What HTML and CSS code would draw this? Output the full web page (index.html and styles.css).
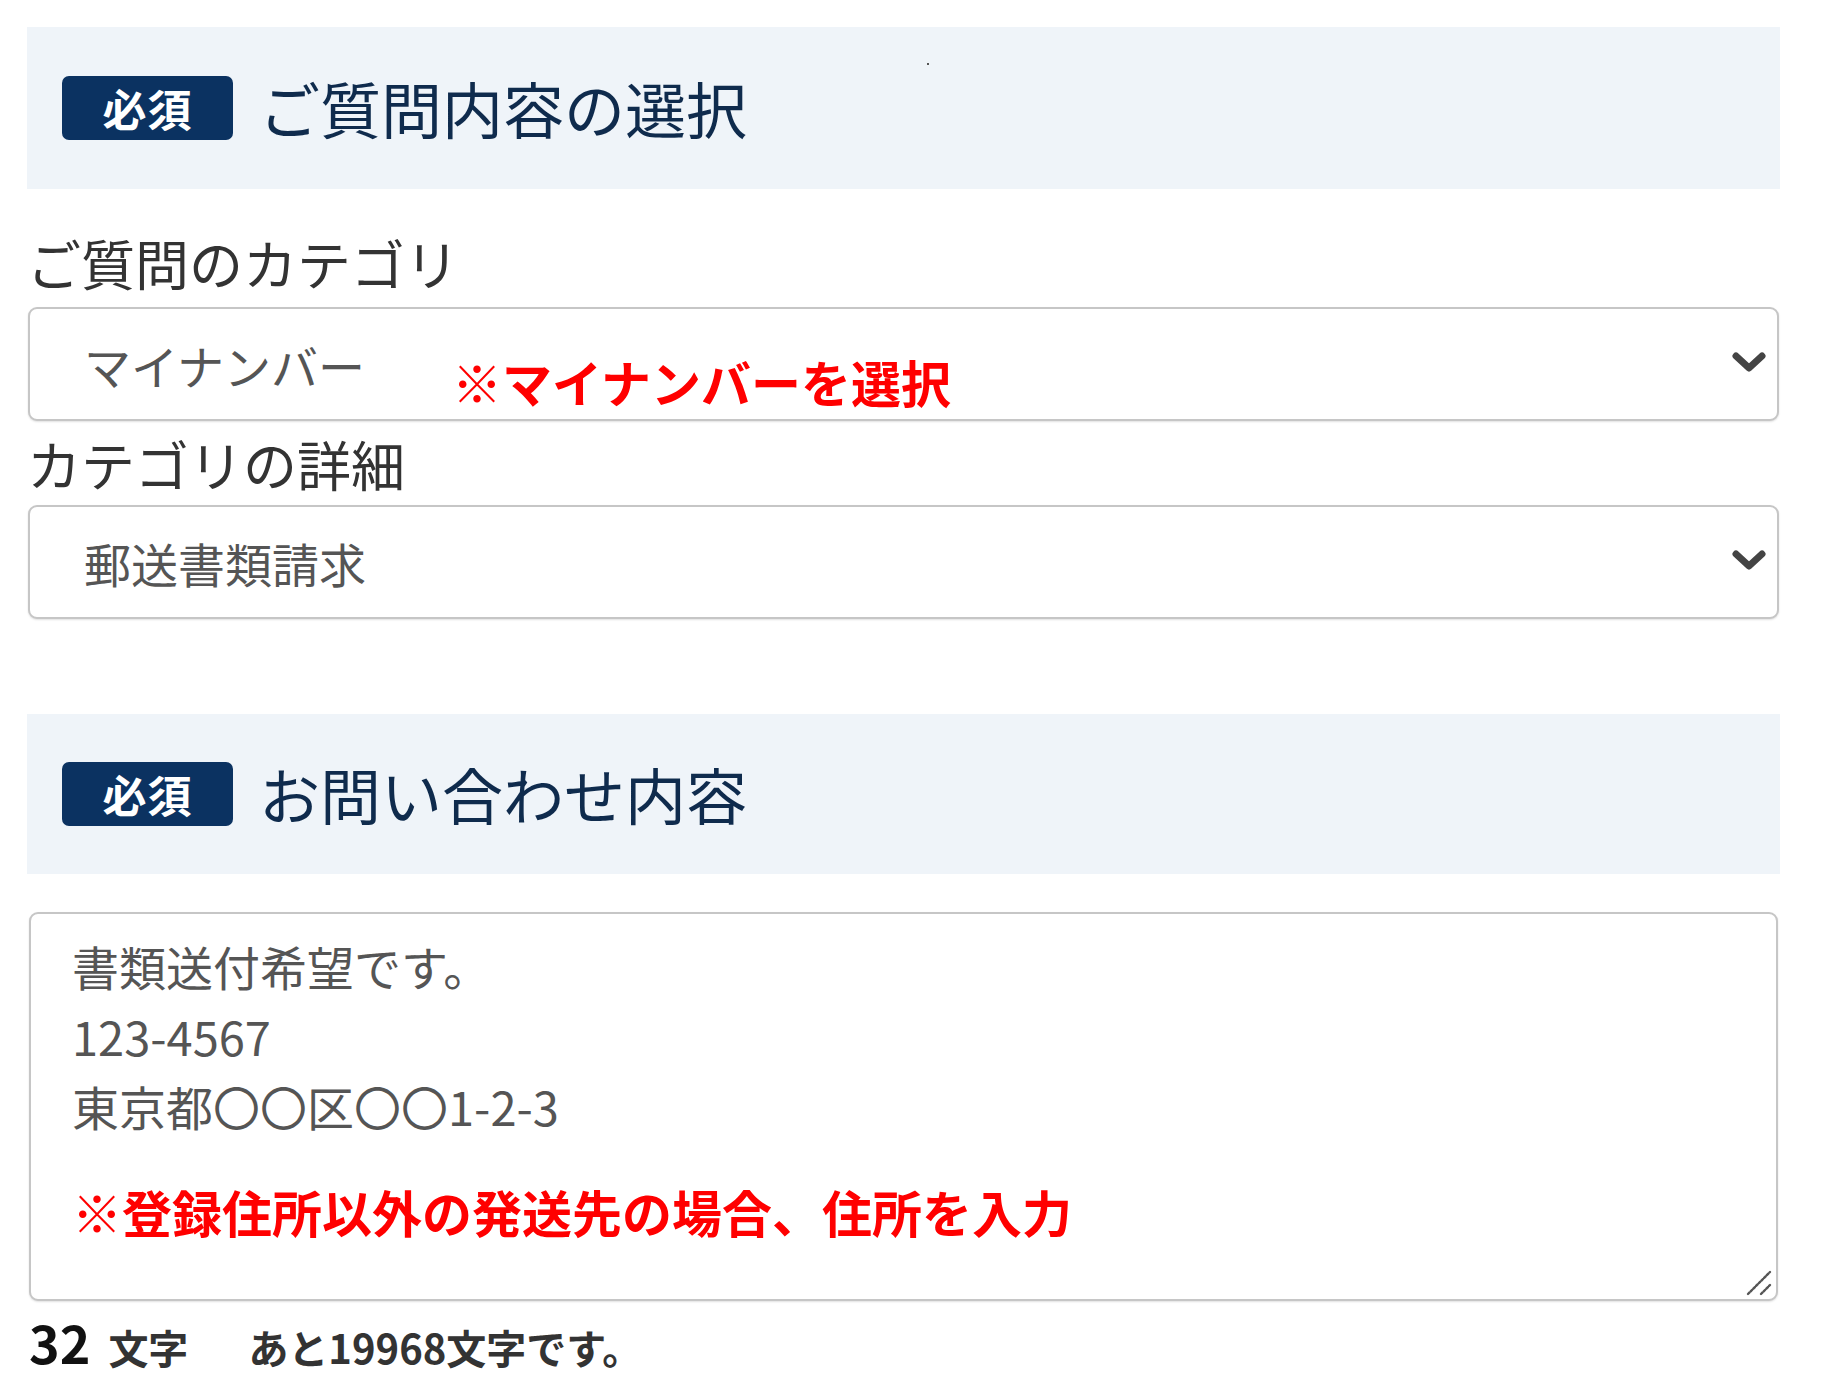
FILE: index.html
```html
<!DOCTYPE html>
<html lang="ja">
<head>
<meta charset="utf-8">
<title>お問い合わせ</title>
<link rel="stylesheet" href="styles.css">
</head>
<body>
<div class="form">
  <div class="band">
    <span class="badge">必須</span>
    <h2 class="band-title">ご質問内容の選択</h2>
    <span class="speck"></span>
  </div>

  <div class="label label-first">ご質問のカテゴリ</div>
  <div class="select">
    <span class="select-value">マイナンバー</span>
    <svg class="chevron" viewBox="0 0 34 22" aria-hidden="true"><polyline points="4,4 17,16 30,4" fill="none" stroke="#444" stroke-width="7" stroke-linejoin="round" stroke-linecap="round"/></svg>
    <span class="note note-select">※マイナンバーを選択</span>
  </div>

  <div class="label label-second">カテゴリの詳細</div>
  <div class="select">
    <span class="select-value">郵送書類請求</span>
    <svg class="chevron" viewBox="0 0 34 22" aria-hidden="true"><polyline points="4,4 17,16 30,4" fill="none" stroke="#444" stroke-width="7" stroke-linejoin="round" stroke-linecap="round"/></svg>
  </div>

  <div class="band band-second">
    <span class="badge">必須</span>
    <h2 class="band-title">お問い合わせ内容</h2>
  </div>

  <div class="textarea-wrap">
    <textarea class="textarea" readonly>書類送付希望です。
123-4567
東京都〇〇区〇〇1-2-3</textarea>
    <span class="note note-textarea">※登録住所以外の発送先の場合、住所を入力</span>
    <svg class="grip" viewBox="0 0 26 26" aria-hidden="true">
      <line x1="2" y1="24" x2="24" y2="2" stroke="#555" stroke-width="2.4" stroke-dasharray="2.2 1.6" stroke-linecap="round"/>
      <line x1="15" y1="24" x2="24" y2="15" stroke="#555" stroke-width="2.4" stroke-dasharray="2.2 1.6" stroke-linecap="round"/>
    </svg>
  </div>

  <div class="counter">
    <span class="count">32</span>
    <span class="count-unit">文字</span>
    <span class="remain">あと19968文字です。</span>
  </div>
</div>
</body>
</html>
```

FILE: styles.css
```css
html, body {
  margin: 0;
  padding: 0;
  background: #ffffff;
}

body {
  font-family: "Noto Sans CJK JP", "Noto Sans", sans-serif;
  color: #333333;
}

.form {
  width: 1753px;
  padding: 27px 0 0 27px;
  display: flex;
  flex-direction: column;
}

.band {
  position: relative;
  height: 162px;
  background: #eff4f9;
  display: flex;
  align-items: center;
  padding-left: 35px;
  box-sizing: border-box;
}

.band-second {
  margin-top: 95px;
  height: 160px;
}

.badge {
  width: 171px;
  height: 64px;
  border-radius: 7px;
  background: #0b3261;
  color: #ffffff;
  font-size: 44px;
  font-weight: 700;
  line-height: 64px;
  text-align: center;
  letter-spacing: 1px;
}

.band-title {
  margin: 0 0 0 26px;
  font-size: 61px;
  font-weight: 400;
  line-height: 64px;
  color: #0f2b4d;
}

.speck {
  position: absolute;
  left: 900px;
  top: 36px;
  width: 2px;
  height: 2px;
  background: #555;
}

.label {
  font-size: 54px;
  line-height: 64px;
  color: #333333;
}

.label-first {
  margin-top: 42px;
  margin-bottom: 12px;
}

.label-second {
  margin-top: 11px;
  margin-bottom: 9px;
}

.select {
  position: relative;
  width: 1751px;
  height: 114px;
  margin-left: 1px;
  box-sizing: border-box;
  border: 2px solid #c6c6c6;
  border-radius: 9px;
  box-shadow: 0 1px 2px rgba(0, 0, 0, 0.12);
  background: #ffffff;
  display: flex;
  align-items: center;
  padding-left: 54px;
}

.select-value {
  font-size: 47px;
  line-height: 60px;
  color: #555555;
  margin-top: 2px;
}

.chevron {
  position: absolute;
  right: 11px;
  top: 43px;
  width: 34px;
  height: 22px;
}

.note {
  position: absolute;
  font-size: 50px;
  font-weight: 700;
  line-height: 60px;
  color: #ff0000;
  white-space: nowrap;
}

.note-select {
  left: 422px;
  top: 42px;
}

.textarea-wrap {
  position: relative;
  margin-top: 38px;
  margin-left: 2px;
  width: 1749px;
  height: 389px;
}

.textarea {
  display: block;
  width: 100%;
  height: 100%;
  box-sizing: border-box;
  border: 2px solid #c6c6c6;
  border-radius: 9px;
  box-shadow: 0 1px 2px rgba(0, 0, 0, 0.12);
  padding: 17px 20px 0 41px;
  margin: 0;
  font-family: "Noto Sans CJK JP", "Noto Sans", sans-serif;
  font-size: 47px;
  line-height: 70px;
  color: #555555;
  background: #ffffff;
  outline: none;
  overflow: hidden;
  resize: none;
}

.note-textarea {
  left: 43px;
  top: 269px;
}

.grip {
  position: absolute;
  right: 6px;
  bottom: 5px;
  width: 26px;
  height: 26px;
}

.counter {
  display: flex;
  align-items: baseline;
  margin-top: 19px;
  margin-left: 2px;
  line-height: 44px;
  font-weight: 700;
}

.count {
  font-size: 52px;
  color: #111111;
}

.count-unit {
  margin-left: 18px;
  font-size: 40px;
  color: #333333;
}

.remain {
  margin-left: 60px;
  font-size: 40px;
  color: #333333;
}
```
